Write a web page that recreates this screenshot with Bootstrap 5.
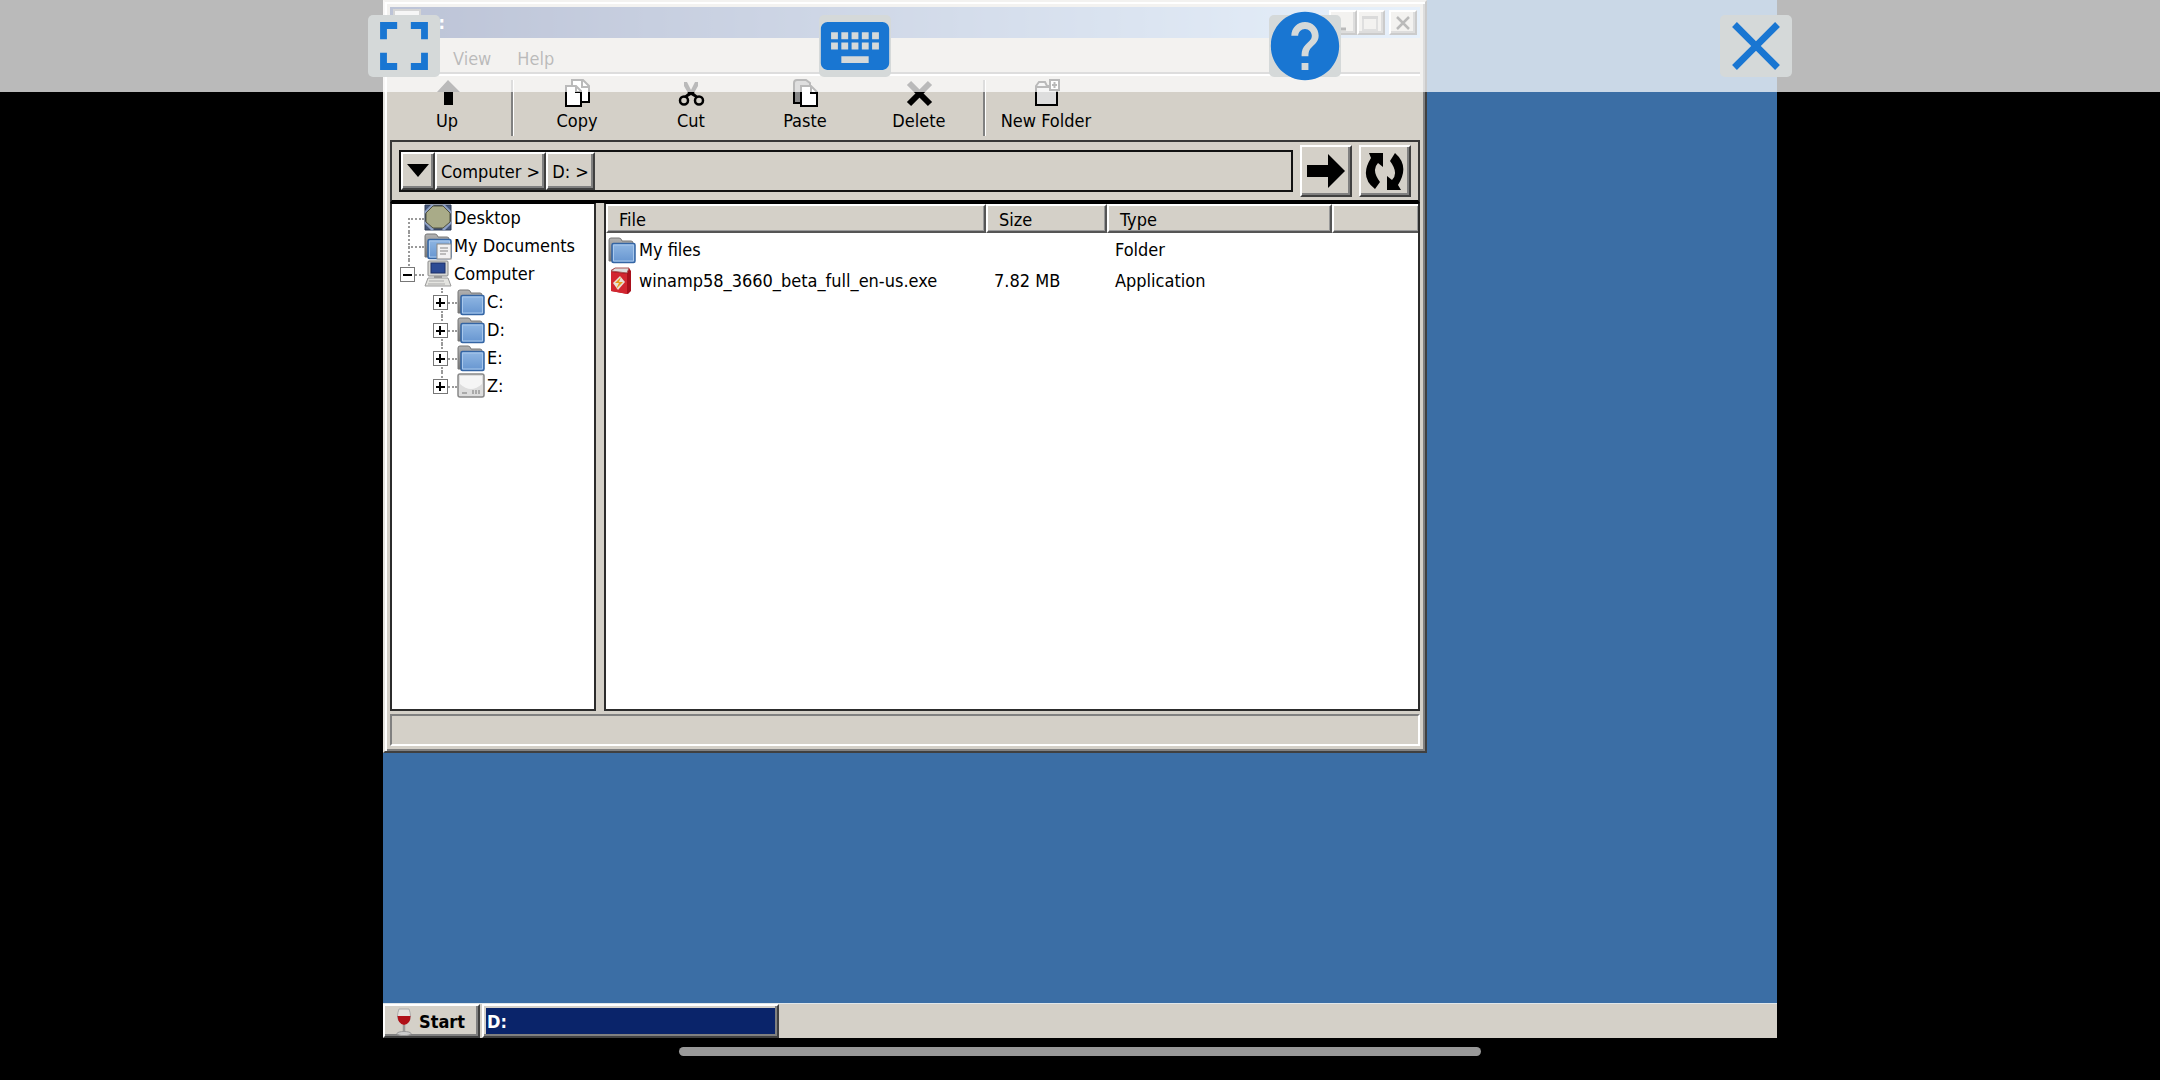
<!DOCTYPE html>
<html lang="en">
<head>
<meta charset="utf-8">
<meta name="viewport" content="width=device-width, initial-scale=1">
<title>D:</title>
<link href="https://cdn.jsdelivr.net/npm/bootstrap@5.3.0/dist/css/bootstrap.min.css" rel="stylesheet">
<style>
  :root { --face: #d4d0c8; --dark: #808080; --ink: #404040; --desk: #3b6ea5; --accent: #1976d2; }
  body { background: #000; color: #000; font-family: "DejaVu Sans Condensed", "DejaVu Sans", sans-serif; font-stretch: condensed; font-size: 18px; line-height: 24px; }
  button { font: inherit; color: inherit; padding: 0; border: 0; background: var(--face); }
  svg { display: block; flex-shrink: 0; }

  .touch-bar { height: 92px; padding: 0 17.05vw; background: rgba(255,255,255,.73); z-index: 10; }
  .touch-btn { width: 72px; height: 62px; border-radius: 5px; background: #d5d9d9; }
  .touch-btn svg { width: 82px; height: 82px; fill: var(--accent); }

  .desktop { width: 64.54%; height: calc(100vh - 42px); background: var(--desk); }
  .home-pill { width: 37.1%; height: 9px; margin-top: 9px; background: #999; }

  .app-window { width: 74.9%; background: var(--face); border: 2px solid; border-color: var(--face) var(--ink) var(--ink) #e4e2dd; box-shadow: inset 2px 2px #fff, inset -2px -2px var(--dark); padding: 5px; }
  .title-strip { height: 31px; padding: 0 3px; background: linear-gradient(90deg, #0a246a, #a6caf0); color: #fff; font-weight: 700; }
  .bevel { border: 2px solid; border-color: #fff var(--ink) var(--ink) #fff; box-shadow: inset -2px -2px var(--dark); background: var(--face); }
  .cap-btn { width: 28px; height: 25px; }
  .menu-strip { height: 38px; padding: 9px 10px 0; gap: 26px; border-bottom: 2px solid #fff; box-shadow: inset 0 -2px var(--dark); }
  .menu-strip a { color: #000; text-decoration: none; }
  .tool-strip { height: 64px; }
  .tool { width: 114px; padding-bottom: 4px; }
  .tool svg { width: 28px; height: 28px; margin: 0 auto 2px; }
  .tool.wide { width: 108px; }
  .rule-v { width: 3px; height: 56px; margin: 4px 6px 0 7px; border-left: 2px solid var(--dark); border-right: 1px solid #fff; }

  .addr { border: 2px solid #383838; border-bottom: 3px solid #000; height: 63px; padding: 0 7px; gap: 7px; }
  .crumbs { height: 42px; border: 2px solid #111; }
  .crumb { padding: 2px 4px 0; height: 38px; }
  .crumb.drop { padding: 0 3px; }
  .go { width: 52px; height: 52px; }

  .panes { height: 508px; gap: 8px; }
  .pane { background: #fff; border: 2px solid #2c2c2c; border-top: 1px solid #000; overflow: hidden; }
  .tree-pane { width: 206px; flex-shrink: 0; }
  .tree-pane ul { list-style: none; margin: 0; padding: 0; }
  .tree-pane ul ul { padding-left: 33px; }
  .node { height: 28px; }
  .node svg { width: 28px; height: 28px; margin-right: 2px; }
  .slot { width: 32px; height: 28px; flex-shrink: 0; position: relative; }
  .slot::before { content: ""; position: absolute; left: 16px; top: 0; bottom: 0; border-left: 2px dotted #999; }
  .slot::after { content: ""; position: absolute; left: 16px; right: 0; top: 14px; border-top: 2px dotted #999; }
  .slot.first::before { top: 14px; }
  .slot.last::before { bottom: 14px; }
  .slot button { position: relative; z-index: 1; display: block; width: 15px; height: 15px; margin: 7px 0 0 8px; border: 1px solid #777; background: linear-gradient(#000,#000) center/9px 2px no-repeat #fff; }
  .slot button.plus { background: linear-gradient(#000,#000) center/9px 2px no-repeat, linear-gradient(#000,#000) center/2px 9px no-repeat #fff; }

  .files { width: 100%; table-layout: fixed; border-collapse: separate; border-spacing: 0; }
  .files th { height: 29px; padding: 3px 0 0 11px; line-height: 20px; font-weight: 400; background: var(--face); border: 2px solid; border-color: #fff #555 #555 #fff; box-shadow: inset -1px -1px #999; }
  .files th:last-child { border-right: 0; }
  .files td { height: 29px; padding: 3px 0 0 8px; }
  .files td:first-child { padding-left: 2px; }
  .files svg { width: 28px; height: 28px; margin-right: 3px; }
  .files .c-file { width: 380px; } .files .c-size { width: 121px; } .files .c-type { width: 225px; }

  .status-strip { height: 32px; margin-top: 3px; border: 2px solid; border-color: var(--dark) #fff #fff var(--dark); }
  .taskbar { height: 35px; background: var(--face); gap: 2px; border-top: 1px solid #dfe6ea; }
  .task { height: 34px; font-weight: 700; padding-top: 2px; }
  .start { width: 97px; padding-left: 8px; gap: 4px; }
  .running { width: 297px; background: #0a246a; color: #fff; padding-left: 3px; box-shadow: inset -2px -2px var(--dark), inset 2px 2px var(--face); }
</style>
</head>
<body class="overflow-hidden">

<svg width="0" height="0" class="position-absolute" aria-hidden="true">
  <defs>
    <linearGradient id="gBlue" x1="0" y1="0" x2="0" y2="1"><stop offset="0" stop-color="#90b7e3"/><stop offset="1" stop-color="#6695d0"/></linearGradient>
    <linearGradient id="gGrey" x1="0" y1="0" x2="0" y2="1"><stop offset="0" stop-color="#b2b2b2"/><stop offset="1" stop-color="#777"/></linearGradient>
    <symbol id="folder" viewBox="0 0 28 28">
      <path d="M1 25V4q0-2 2-2h8q2 0 2.500 2L14 5h9q2 0 2 2v18z" fill="url(#gGrey)" stroke="#777"/>
      <rect x="4" y="7.500" width="23" height="19" rx="1.500" fill="url(#gBlue)" stroke="#3465a4" stroke-width="1.500"/>
      <path d="M5.500 25V9h20v16z" fill="none" stroke="#a9c8ec"/>
    </symbol>
  </defs>
</svg>

<nav class="touch-bar position-absolute top-0 start-0 w-100 d-flex justify-content-between align-items-center" aria-label="Session controls">
  <button class="touch-btn d-flex justify-content-center align-items-center" aria-label="Fullscreen"><svg viewBox="0 0 24 24"><path d="M7 14H5v5h5v-2H7zM5 10h2V7h3V5H5zM17 17h-3v2h5v-5h-2zM14 5v2h3v3h2V5z"/></svg></button>
  <button class="touch-btn d-flex justify-content-center align-items-center" aria-label="Keyboard"><svg viewBox="0 0 24 24"><path d="M20 5H4c-1.100 0-1.990.9-1.990 2L2 17c0 1.100.9 2 2 2h16c1.100 0 2-.9 2-2V7c0-1.100-.9-2-2-2zm-9 3h2v2h-2V8zm0 3h2v2h-2v-2zM8 8h2v2H8V8zm0 3h2v2H8v-2zm-1 2H5v-2h2v2zm0-3H5V8h2v2zm9 7H8v-2h8v2zm0-4h-2v-2h2v2zm0-3h-2V8h2v2zm3 3h-2v-2h2v2zm0-3h-2V8h2v2z"/></svg></button>
  <button class="touch-btn d-flex justify-content-center align-items-center" aria-label="Help"><svg viewBox="0 0 24 24"><path d="M12 2C6.480 2 2 6.480 2 12s4.480 10 10 10 10-4.480 10-10S17.520 2 12 2zm1 17h-2v-2h2v2zm2.070-7.750l-.9.920C13.450 12.900 13 13.500 13 15h-2v-.5c0-1.100.45-2.100 1.170-2.830l1.240-1.260c.37-.36.59-.86.59-1.410 0-1.100-.9-2-2-2s-2 .9-2 2H8c0-2.210 1.790-4 4-4s4 1.790 4 4c0 .88-.36 1.680-.93 2.250z"/></svg></button>
  <button class="touch-btn d-flex justify-content-center align-items-center" aria-label="Close"><svg viewBox="0 0 24 24"><path d="M19 6.410L17.590 5 12 10.590 6.410 5 5 6.410 10.590 12 5 17.590 6.410 19 12 13.410 17.590 19 19 17.590 13.410 12z"/></svg></button>
</nav>

<main class="desktop mx-auto d-flex flex-column justify-content-between">
  <section class="app-window">
    <header class="title-strip d-flex align-items-center">
      <svg width="28" height="28" viewBox="0 0 28 28"><rect x="1" y="1" width="26" height="6" fill="#ddd" stroke="#666" stroke-width="2"/><path d="M1 11h26v14H1z" fill="#aaa" stroke="#666"/></svg>
      <span class="ms-1 flex-grow-1">D:</span>
      <button class="bevel cap-btn" aria-label="Minimize"><svg width="20" height="20" viewBox="0 0 20 20"><path d="M4 16h11" stroke="#000" stroke-width="3"/></svg></button>
      <button class="bevel cap-btn" aria-label="Maximize"><svg width="22" height="20" viewBox="0 0 22 20"><path d="M4 5v12h14V5z" fill="none" stroke="#888" stroke-width="2"/><path d="M3 4.500h16" stroke="#777" stroke-width="3"/></svg></button>
      <button class="bevel cap-btn ms-1" aria-label="Close"><svg width="24" height="20" viewBox="0 0 24 20"><path d="M6 4l12 12M18 4L6 16" stroke="#000" stroke-width="2.500"/></svg></button>
    </header>
    <nav class="menu-strip d-flex"><a href="#">File</a><a href="#">View</a><a href="#">Help</a></nav>

    <div class="tool-strip d-flex" role="toolbar">
      <button class="tool"><svg viewBox="0 0 28 28"><path d="M15 1L27 13h-7v13h-9V13H4z"/></svg>Up</button>
      <div class="rule-v"></div>
      <button class="tool"><svg viewBox="0 0 28 28"><path d="M9 1h11l6 6v16H9z" fill="#fff" stroke="#000" stroke-width="2"/><path d="M19 1v7h7" fill="none" stroke="#000" stroke-width="2"/><path d="M3 7h10l5 5v15H3z" fill="#fff" stroke="#000" stroke-width="2"/><path d="M13 7v6h5" fill="none" stroke="#000" stroke-width="2"/></svg>Copy</button>
      <button class="tool"><svg viewBox="0 0 28 28"><path d="M7 3h3l4 8 4-8h3v4l-4 7 5 4-3 1-5-3-5 3-3-1 5-4-4-7z"/><g fill="none" stroke="#000" stroke-width="2.500"><circle cx="7" cy="21.500" r="4"/><circle cx="22" cy="21.500" r="4"/></g></svg>Cut</button>
      <button class="tool"><svg viewBox="0 0 28 28"><path d="M3 24V4q0-3 3-3h9l4 3v20z" fill="#888" stroke="#000" stroke-width="2"/><path d="M10 7h10l6 6v14H10z" fill="#fff" stroke="#000" stroke-width="2"/><path d="M20 7v7h6" fill="none" stroke="#000" stroke-width="2"/></svg>Paste</button>
      <button class="tool"><svg viewBox="0 0 28 28"><path d="M4 4l21 21M25 4L4 25" stroke="#000" stroke-width="6"/></svg>Delete</button>
      <div class="rule-v"></div>
      <button class="tool wide"><svg viewBox="0 0 28 28"><path d="M4 26V7l3-4h6l2 4h10v19z" fill="#ddd" stroke="#000" stroke-width="2"/><path d="M4 8h13" stroke="#000" stroke-width="2"/><rect x="18" y="1" width="9" height="10" fill="#fff" stroke="#000" stroke-width="2"/><path d="M22.500 3v6M20 6h5" stroke="#000" stroke-width="2"/></svg>New Folder</button>
    </div>

    <div class="addr d-flex align-items-center">
      <div class="crumbs flex-grow-1 d-flex">
        <button class="bevel crumb drop" aria-label="History"><svg width="24" height="24" viewBox="0 0 24 24"><path d="M1 5h22L12 18z"/></svg></button>
        <button class="bevel crumb">Computer &gt;</button>
        <button class="bevel crumb">D: &gt;</button>
      </div>
      <button class="bevel go" aria-label="Go"><svg width="46" height="48" viewBox="0 0 46 48"><path d="M5 18h21V7l17 17-17 17V30H5z"/></svg></button>
      <button class="bevel go" aria-label="Refresh"><svg width="46" height="48" viewBox="0 0 46 48"><path d="M8 6h14v14l-5-4q-7 7 2 19l-5 7Q-2 30 10 11z"/><path d="M40 43H26V29l5 4q7-7-2-19l5-8q15 13 3 32z"/></svg></button>
    </div>

    <div class="panes d-flex">
      <div class="pane tree-pane">
        <ul>
          <li class="node d-flex align-items-center"><span class="slot first"></span><svg viewBox="0 0 28 28"><path d="M1 1h26v25H1z" fill="#46577b" stroke="#2d3a55"/><path d="M1 9l8-8M19 1l8 8M1 18l8 8M27 18l-8 8" stroke="#8ea0c4" stroke-width="3"/><path d="M9 2h10l7 7v9l-7 6H9l-7-6V9z" fill="#a9ab88" stroke="#4f503c"/></svg>Desktop</li>
          <li class="node d-flex align-items-center"><span class="slot"></span><svg viewBox="0 0 28 28"><use href="#folder"/><rect x="13" y="12" width="14" height="15" fill="#f2f2f2" stroke="#888"/><path d="M16 16h8M16 19h8M16 22h6" stroke="#aaa" stroke-width="1.500"/></svg>My Documents</li>
          <li>
            <div class="node d-flex align-items-center"><span class="slot last"><button aria-label="Collapse Computer"></button></span><svg viewBox="0 0 28 28"><rect x="4" y="1" width="20" height="15" rx="1" fill="#d8d8d4" stroke="#888"/><rect x="7" y="3" width="14" height="10" fill="#2c4a94" stroke="#1c2f66"/><path d="M10 16h8v3h-8z" fill="#999"/><path d="M4 18h20l3 8H1z" fill="#e4e4e0" stroke="#999"/><path d="M5 21h15M4 24h17" stroke="#aaa"/></svg>Computer</div>
            <ul>
              <li class="node d-flex align-items-center"><span class="slot"><button class="plus" aria-label="Expand C:"></button></span><svg><use href="#folder"/></svg>C:</li>
              <li class="node d-flex align-items-center"><span class="slot"><button class="plus" aria-label="Expand D:"></button></span><svg><use href="#folder"/></svg>D:</li>
              <li class="node d-flex align-items-center"><span class="slot"><button class="plus" aria-label="Expand E:"></button></span><svg><use href="#folder"/></svg>E:</li>
              <li class="node d-flex align-items-center"><span class="slot last"><button class="plus" aria-label="Expand Z:"></button></span><svg viewBox="0 0 28 28"><rect x="1" y="2" width="26" height="23" rx="2" fill="#ddd" stroke="#888" stroke-width="1.500"/><path d="M3 4h22v8q-11 10-22 0z" fill="#f5f5f5"/><path d="M5 21h5M16 18v4M19 18v4M22 18v4" stroke="#999" stroke-width="1.500"/></svg>Z:</li>
            </ul>
          </li>
        </ul>
      </div>
      <div class="pane flex-grow-1">
        <table class="files">
          <colgroup><col class="c-file"><col class="c-size"><col class="c-type"><col></colgroup>
          <thead><tr><th scope="col">File</th><th scope="col">Size</th><th scope="col">Type</th><th></th></tr></thead>
          <tbody>
            <tr><td><div class="d-flex align-items-center"><svg><use href="#folder"/></svg>My files</div></td><td></td><td>Folder</td><td></td></tr>
            <tr><td><div class="d-flex align-items-center"><svg viewBox="0 0 28 28"><path d="M3 3l4-2h14l2 3v20l-3 3-17-3z" fill="#a8101c"/><path d="M3 5l16 2v20L3 24z" fill="#d22630"/><path d="M3 4l4-3h14l-2 5z" fill="#ddd" stroke="#a55"/><path d="M12 9l5 6-7 8-5-7z" fill="#e8e0d8"/><path d="M13 10l-6 6h4l-3 6 7-7h-4z" fill="#e89a1c"/></svg>winamp58_3660_beta_full_en-us.exe</div></td><td>7.82 MB</td><td>Application</td><td></td></tr>
          </tbody>
        </table>
      </div>
    </div>
    <footer class="status-strip"></footer>
  </section>

  <footer class="taskbar d-flex">
    <button class="bevel task start d-flex align-items-center"><svg width="22" height="28" viewBox="0 0 22 28"><path d="M6 1h10q3 8 0 12-5 6-10 0-3-4 0-12z" fill="#e4e0dc" stroke="#aaa"/><path d="M4.500 8h13q0 8-6.500 9-6-1-6.500-9z" fill="#b01018"/><path d="M11 17v8" stroke="#999" stroke-width="2.500"/><ellipse cx="11" cy="25.500" rx="7" ry="2" fill="#ccc" stroke="#999"/></svg>Start</button>
    <button class="bevel task running text-start">D:</button>
  </footer>
</main>
<div class="home-pill rounded-pill mx-auto"></div>

<script src="https://cdn.jsdelivr.net/npm/bootstrap@5.3.0/dist/js/bootstrap.bundle.min.js"></script>
</body>
</html>
